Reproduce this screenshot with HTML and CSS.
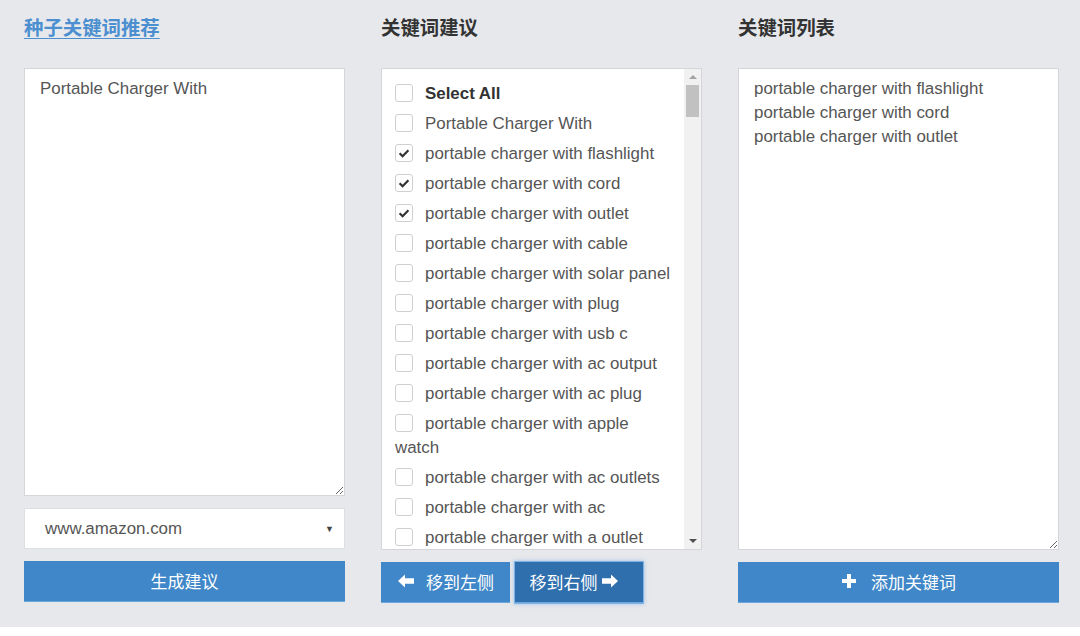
FILE: index.html
```html
<!DOCTYPE html>
<html lang="zh">
<head>
<meta charset="utf-8">
<link rel="stylesheet" href="styles.css">
</head>
<body>
<div class="page">
  <div class="col">
    <h2 class="title"><a class="title-link" href="#">种子关键词推荐</a></h2>
    <textarea class="box seed-box">Portable Charger With</textarea>
    <div class="select"><span>www.amazon.com</span><span class="caret">▼</span></div>
    <button class="btn btn-full">生成建议</button>
  </div>
  <div class="col">
    <h2 class="title">关键词建议</h2>
    <div class="box list-box">
      <div class="list">
        <div class="item bold"><span class="cb"></span>Select All</div>
        <div class="item"><span class="cb"></span>Portable Charger With</div>
        <div class="item"><span class="cb on"><svg viewBox="0 0 18 18" width="18" height="18"><path d="M4.6 9.2 L7.6 12.2 L13.4 6.2" fill="none" stroke="#333" stroke-width="2.2"/></svg></span>portable charger with flashlight</div>
        <div class="item"><span class="cb on"><svg viewBox="0 0 18 18" width="18" height="18"><path d="M4.6 9.2 L7.6 12.2 L13.4 6.2" fill="none" stroke="#333" stroke-width="2.2"/></svg></span>portable charger with cord</div>
        <div class="item"><span class="cb on"><svg viewBox="0 0 18 18" width="18" height="18"><path d="M4.6 9.2 L7.6 12.2 L13.4 6.2" fill="none" stroke="#333" stroke-width="2.2"/></svg></span>portable charger with outlet</div>
        <div class="item"><span class="cb"></span>portable charger with cable</div>
        <div class="item"><span class="cb"></span>portable charger with solar panel</div>
        <div class="item"><span class="cb"></span>portable charger with plug</div>
        <div class="item"><span class="cb"></span>portable charger with usb c</div>
        <div class="item"><span class="cb"></span>portable charger with ac output</div>
        <div class="item"><span class="cb"></span>portable charger with ac plug</div>
        <div class="item"><span class="cb"></span>portable charger with apple watch</div>
        <div class="item"><span class="cb"></span>portable charger with ac outlets</div>
        <div class="item"><span class="cb"></span>portable charger with ac</div>
        <div class="item"><span class="cb"></span>portable charger with a outlet</div>
      </div>
      <div class="scrollbar">
        <span class="arrow up"></span>
        <div class="track"><div class="thumb"></div></div>
        <span class="arrow down"></span>
      </div>
    </div>
    <div class="btn-row">
      <button class="btn btn-half"><svg class="ico" viewBox="0 0 18 16" width="18" height="16"><path d="M1 8 L8 1.5 L8 5.2 L17 5.2 L17 10.8 L8 10.8 L8 14.5 Z" fill="#fff"/></svg>移到左侧</button>
      <button class="btn btn-half active">移到右侧<svg class="ico ico-r" viewBox="0 0 18 16" width="18" height="16"><path d="M17 8 L10 1.5 L10 5.2 L1 5.2 L1 10.8 L10 10.8 L10 14.5 Z" fill="#fff"/></svg></button>
    </div>
  </div>
  <div class="col">
    <h2 class="title">关键词列表</h2>
    <textarea class="box result-box">portable charger with flashlight
portable charger with cord
portable charger with outlet</textarea>
    <button class="btn btn-full btn-add"><svg class="ico plus" viewBox="0 0 16 16" width="16" height="16"><path d="M6 1 H10 V6 H15 V10 H10 V15 H6 V10 H1 V6 H6 Z" fill="#fff"/></svg>添加关键词</button>
  </div>
</div>
</body>
</html>
```
FILE: styles.css
```css
html, body {
  margin: 0;
  padding: 0;
  background: #ffffff;
}
body {
  font-family: "Liberation Sans", Arial, "Noto Sans CJK SC", sans-serif;
  color: #555;
}
.page {
  height: 627px;
  box-sizing: border-box;
  background: #e6e8eb;
  display: flex;
  gap: 36px;
  padding: 0 21px 0 24px;
}
.col {
  width: 321px;
  display: flex;
  flex-direction: column;
}
.title {
  margin: 0;
  height: 68px;
  box-sizing: border-box;
  padding-top: 15px;
  font-family: "Noto Sans CJK SC", sans-serif;
  font-size: 19.4px;
  line-height: 24px;
  font-weight: 700;
  color: #333;
}
.title-link {
  color: #4b8fd0;
  text-decoration: underline;
  text-underline-offset: 3px;
}
.box {
  box-sizing: border-box;
  background: #fff;
  border: 1px solid #d4d6d9;
  margin: 0;
  font-family: "Liberation Sans", Arial, sans-serif;
  font-size: 16.9px;
  line-height: 24px;
  color: #555;
}
textarea.box {
  display: block;
  width: 321px;
  padding: 8px 15px;
  resize: both;
  outline: none;
  overflow: hidden;
}
.seed-box {
  height: 428px;
}
.result-box {
  height: 482px;
}
.select {
  margin-top: 12px;
  height: 41px;
  box-sizing: border-box;
  background: #fff;
  border: 1px solid #dcdee1;
  display: flex;
  align-items: center;
  justify-content: space-between;
  padding: 0 10px 0 20px;
  font-size: 16.9px;
  color: #555;
}
.caret {
  font-size: 9px;
  color: #444;
}
.btn {
  box-sizing: border-box;
  height: 41px;
  border: none;
  background: #3f87c8;
  color: #fff;
  font-family: "Noto Sans CJK SC", sans-serif;
  font-size: 17px;
  display: flex;
  align-items: center;
  justify-content: center;
  padding: 0 0 2px 0;
  border-bottom: 1px solid #6aa7dc;
}
.btn-full {
  width: 321px;
  margin-top: 12px;
}
.btn-add {
  margin-top: 12px;
}
.btn-row {
  margin-top: 12px;
  display: flex;
  gap: 5px;
}
.btn-half {
  width: 129px;
}
.btn-half.active {
  width: 128px;
  padding-right: 10px;
  background: #2f6fae;
  box-shadow: 0 0 0 1px #7fb3e6, 0 0 4px 1px rgba(120, 170, 230, 0.6);
}
.ico {
  margin-right: 11px;
}
.ico-r {
  margin: 0 0 0 3px;
}
.plus {
  margin-right: 14px;
}
.list-box {
  height: 482px;
  display: flex;
  overflow: hidden;
}
.list {
  flex: 1;
  overflow: hidden;
  padding: 13px 10px 0 13px;
  color: #555;
}
.item {
  line-height: 24px;
  padding-bottom: 6px;
}
.item.bold {
  font-weight: 700;
  color: #333;
}
.cb {
  display: inline-block;
  box-sizing: border-box;
  width: 18px;
  height: 18px;
  border: 1px solid #cfcfcf;
  border-radius: 3px;
  background: #fff;
  vertical-align: -3px;
  margin-right: 12px;
  position: relative;
}
.cb svg {
  position: absolute;
  left: -1px;
  top: -1px;
}
.scrollbar {
  width: 17px;
  background: #f1f1f1;
  display: flex;
  flex-direction: column;
  align-items: center;
}
.arrow {
  width: 0;
  height: 0;
  border-left: 4px solid transparent;
  border-right: 4px solid transparent;
  margin: 6px 0;
}
.arrow.up {
  border-bottom: 4px solid #a3a3a3;
}
.arrow.down {
  border-top: 4px solid #505050;
}
.track {
  flex: 1;
  width: 100%;
  display: flex;
  justify-content: center;
}
.thumb {
  width: 13px;
  height: 32px;
  background: #c1c1c1;
  margin-top: 0;
}
```
